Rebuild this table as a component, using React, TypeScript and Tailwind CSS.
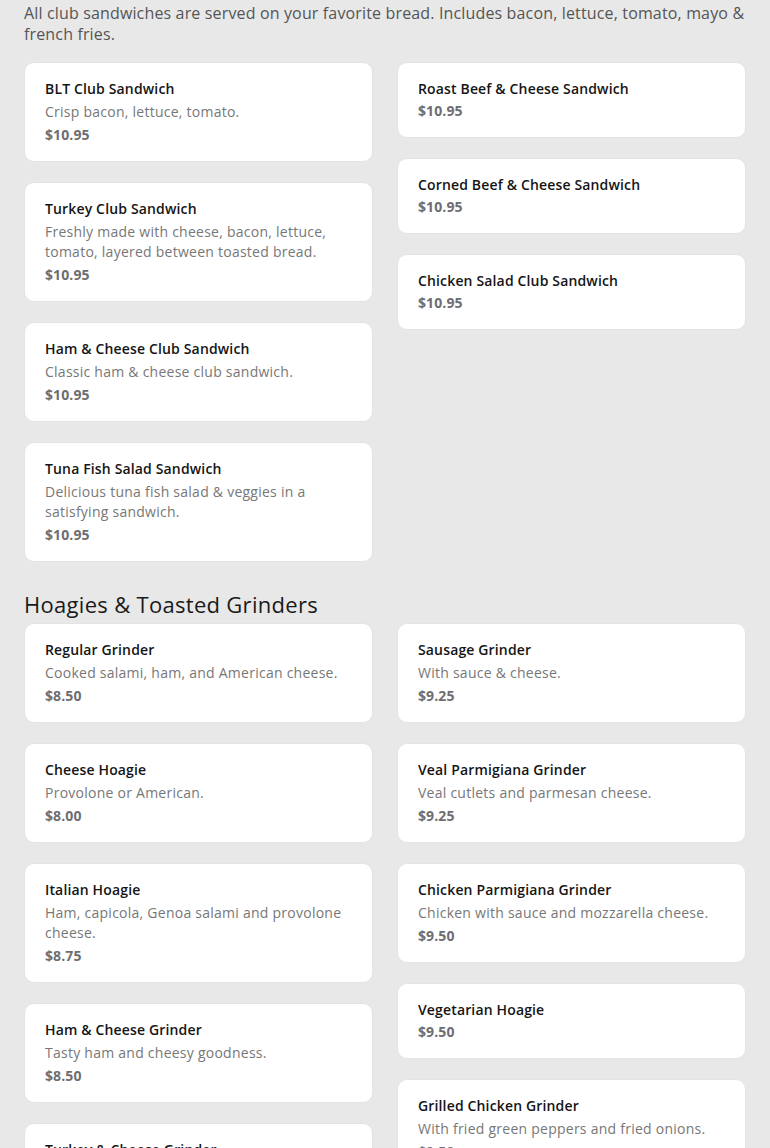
import React from "react";

type Item = { name: string; desc?: string; price: string };

const clubLeft: Item[] = [
  { name: "BLT Club Sandwich", desc: "Crisp bacon, lettuce, tomato.", price: "$10.95" },
  { name: "Turkey Club Sandwich", desc: "Freshly made with cheese, bacon, lettuce, tomato, layered between toasted bread.", price: "$10.95" },
  { name: "Ham & Cheese Club Sandwich", desc: "Classic ham & cheese club sandwich.", price: "$10.95" },
  { name: "Tuna Fish Salad Sandwich", desc: "Delicious tuna fish salad & veggies in a satisfying sandwich.", price: "$10.95" },
];
const clubRight: Item[] = [
  { name: "Roast Beef & Cheese Sandwich", price: "$10.95" },
  { name: "Corned Beef & Cheese Sandwich", price: "$10.95" },
  { name: "Chicken Salad Club Sandwich", price: "$10.95" },
];
const hoagLeft: Item[] = [
  { name: "Regular Grinder", desc: "Cooked salami, ham, and American cheese.", price: "$8.50" },
  { name: "Cheese Hoagie", desc: "Provolone or American.", price: "$8.00" },
  { name: "Italian Hoagie", desc: "Ham, capicola, Genoa salami and provolone cheese.", price: "$8.75" },
  { name: "Ham & Cheese Grinder", desc: "Tasty ham and cheesy goodness.", price: "$8.50" },
  { name: "Turkey & Cheese Grinder", desc: "Sliced turkey and cheese.", price: "$8.50" },
];
const hoagRight: Item[] = [
  { name: "Sausage Grinder", desc: "With sauce & cheese.", price: "$9.25" },
  { name: "Veal Parmigiana Grinder", desc: "Veal cutlets and parmesan cheese.", price: "$9.25" },
  { name: "Chicken Parmigiana Grinder", desc: "Chicken with sauce and mozzarella cheese.", price: "$9.50" },
  { name: "Vegetarian Hoagie", price: "$9.50" },
  { name: "Grilled Chicken Grinder", desc: "With fried green peppers and fried onions.", price: "$9.50" },
];

function Card({ item }: { item: Item }) {
  return (
    <div className="bg-white rounded-[10px] border border-[#e4e4e4] pl-[20px] pr-[16px] pt-[16px] pb-[16px]">
      <div className="text-[14px] leading-[20px] font-semibold tracking-[0.15px] text-[#151515]">{item.name}</div>
      {item.desc && (
        <div className="mt-[3px] text-[14px] leading-[20px] tracking-[0.25px] text-[#777777]">{item.desc}</div>
      )}
      <div className={`${item.desc ? "mt-[3px]" : "mt-[2px]"} text-[14px] leading-[20px] font-bold tracking-[0.1px] text-[#6e6e72]`}>
        {item.price}
      </div>
    </div>
  );
}

function Column({ items }: { items: Item[] }) {
  return (
    <div className="flex flex-col gap-[20px]">
      {items.map((it) => (
        <Card key={it.name} item={it} />
      ))}
    </div>
  );
}

export default function App() {
  return (
    <div
      className="h-[1148px] bg-[#e8e8e8] px-[24px] pt-[3px] overflow-hidden"
      style={{ fontFamily: '"Open Sans", "Noto Sans", sans-serif' }}
    >
      <p className="text-[16px] leading-[21px] tracking-[0.15px] text-[#555555]">
        All club sandwiches are served on your favorite bread. Includes bacon, lettuce, tomato, mayo &amp; french fries.
      </p>
      <div className="mt-[17px] grid grid-cols-2 gap-x-[24px] items-start">
        <Column items={clubLeft} />
        <Column items={clubRight} />
      </div>
      <h2 className="mt-[28px] mb-[5px] text-[22px] leading-[28px] font-normal tracking-[0.3px] text-[#1a1a1a]">
        Hoagies &amp; Toasted Grinders
      </h2>
      <div className="grid grid-cols-2 gap-x-[24px] items-start">
        <Column items={hoagLeft} />
        <Column items={hoagRight} />
      </div>
    </div>
  );
}
